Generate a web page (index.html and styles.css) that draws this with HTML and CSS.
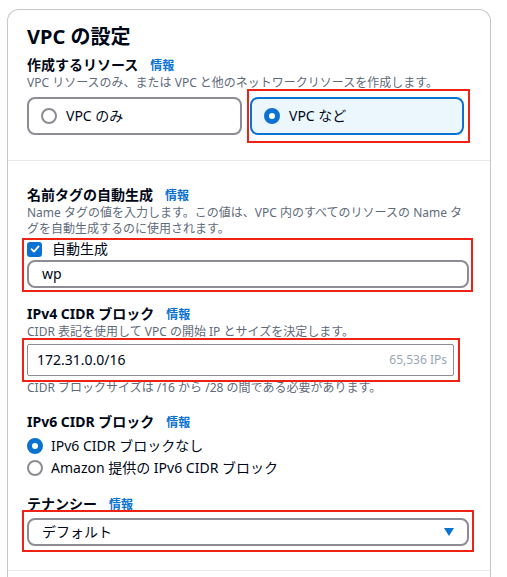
FILE: index.html
```html
<!DOCTYPE html>
<html lang="ja">
<head>
    <meta charset="UTF-8">
    <title>VPC の設定</title>
    <link rel="stylesheet" href="styles.css">
</head>
<body>
<div class="card">
    <section class="panel panel-top">
        <h2 class="title">VPC の設定</h2>
        <div class="label">作成するリソース <a class="info" href="#">情報</a></div>
        <p class="desc">VPC リソースのみ、または VPC と他のネットワークリソースを作成します。</p>
        <div class="tiles">
            <label class="tile"><span class="radio"></span>VPC のみ</label>
            <label class="tile selected"><span class="radio on"></span>VPC など<span class="mark mark-tile"></span></label>
        </div>
    </section>

    <section class="panel">
        <!--名前タグ-->
        <div class="field">
            <div class="label">名前タグの自動生成 <a class="info" href="#">情報</a></div>
            <p class="desc two">Name タグの値を入力します。この値は、VPC 内のすべてのリソースの Name タグを自動生成するのに使用されます。</p>
            <div class="marked">
                <label class="check-row">
                    <span class="checkbox">
                        <svg width="10" height="10" viewBox="0 0 10 10"><path d="M1.5 5.2 L4 7.6 L8.6 2.4" fill="none" stroke="#fff" stroke-width="1.8" stroke-linecap="round" stroke-linejoin="round"/></svg>
                    </span>自動生成
                </label>
                <div class="input round">wp</div>
                <span class="mark mark-name"></span>
            </div>
        </div>

        <!--IPv4-->
        <div class="field gap">
            <div class="label">IPv4 CIDR ブロック <a class="info" href="#">情報</a></div>
            <p class="desc">CIDR 表記を使用して VPC の開始 IP とサイズを決定します。</p>
            <div class="marked cidr-wrap">
                <div class="input cidr"><span>172.31.0.0/16</span><span class="count">65,536 IPs</span></div>
                <span class="mark mark-cidr"></span>
            </div>
            <p class="desc hint">CIDR ブロックサイズは /16 から /28 の間である必要があります。</p>
        </div>

        <!--IPv6-->
        <div class="field gap">
            <div class="label">IPv6 CIDR ブロック <a class="info" href="#">情報</a></div>
            <ul class="radios">
                <li><span class="radio on"></span>IPv6 CIDR ブロックなし</li>
                <li><span class="radio"></span>Amazon 提供の IPv6 CIDR ブロック</li>
            </ul>
        </div>

        <!--テナンシー-->
        <div class="field gap-s">
            <div class="label">テナンシー <a class="info" href="#">情報</a></div>
            <div class="marked select-wrap">
                <div class="input round select"><span>デフォルト</span><span class="caret"></span></div>
                <span class="mark mark-select"></span>
            </div>
        </div>
    </section>

    <section class="panel panel-next"></section>
</div>
</body>
</html>
```

FILE: styles.css
```css
* {
    margin: 0;
    padding: 0;
    box-sizing: border-box;
}

html, body {
    overflow: hidden;
}

body {
    background: #fff;
    color: #000716;
    font-family: "Noto Sans", "Noto Sans CJK JP", sans-serif;
    font-size: 14px;
    line-height: 20px;
}

ul {
    list-style: none;
}

.card {
    width: 484px;
    height: calc(100vh - 9px);
    margin: 9px 0 0 7px;
    border: 1px solid #c6c6cd;
    border-bottom: 0;
    border-radius: 12px 12px 0 0;
}

.panel {
    padding: 24px 21px 24px 19px;
    border-top: 1px solid #e9ebed;
}

.panel-top {
    padding-top: 15px;
    padding-bottom: 25px;
    border-top: 0;
}

.title {
    height: 24px;
    font-size: 20px;
    line-height: 24px;
    font-weight: bold;
}

.panel-top .label {
    margin-top: 6px;
}

.label {
    display: flex;
    align-items: baseline;
    gap: 12px;
    height: 20px;
    font-weight: bold;
}

.info {
    color: #0972d3;
    font-size: 12px;
    line-height: 16px;
    text-decoration: none;
}

.desc {
    height: 16px;
    color: #5f6b7a;
    font-size: 12px;
    line-height: 16px;
}

.desc.two {
    height: 32px;
}

.tiles {
    display: grid;
    grid-template-columns: 215px 214px;
    gap: 8px;
    margin-top: 6px;
}

.tile {
    position: relative;
    display: flex;
    align-items: center;
    gap: 9px;
    height: 38px;
    padding: 0 12px;
    border: 2px solid #8c8c94;
    border-radius: 8px;
}

.tile.selected {
    border-color: #0972d3;
    background: #ebf6fd;
}

.radio {
    display: inline-block;
    width: 16px;
    height: 16px;
    border: 2px solid #8c8c94;
    border-radius: 50%;
    background: #fff;
    flex: none;
}

.radio.on {
    border: 5px solid #0972d3;
}

.marked {
    position: relative;
}

.mark {
    position: absolute;
    border: 2px solid #ee2316;
}

.mark-tile {
    top: -10px;
    left: -5px;
    right: -8px;
    bottom: -10px;
}

.mark-name {
    top: -1px;
    left: -5px;
    right: -4px;
    bottom: -4px;
}

.mark-cidr {
    top: -6px;
    left: -5px;
    right: -6px;
    bottom: -6px;
}

.mark-select {
    top: -8px;
    left: -5px;
    right: -5px;
    bottom: -6px;
}

.check-row {
    display: flex;
    align-items: center;
    gap: 10px;
    height: 20px;
    margin-top: 2px;
}

.checkbox {
    display: flex;
    align-items: center;
    justify-content: center;
    width: 15px;
    height: 15px;
    border-radius: 3px;
    background: #0972d3;
}

.input {
    display: flex;
    align-items: center;
    border: 1px solid #8c8c94;
    border-radius: 2px;
}

.input.round {
    height: 28px;
    margin-top: 1px;
    padding: 0 13px;
    border: 2px solid #8c8c94;
    border-radius: 8px;
}

.gap {
    margin-top: 16px;
}

.gap-s {
    margin-top: 15px;
}

.cidr-wrap {
    width: 427px;
    margin-top: 4px;
}

.cidr {
    justify-content: space-between;
    height: 32px;
    padding: 0 6px 0 9px;
}

.count {
    color: #9ba7b6;
    font-size: 12px;
}

.hint {
    margin-top: 4px;
}

.radios {
    margin-top: 3px;
}

.radios li {
    display: flex;
    align-items: center;
    gap: 8px;
    height: 22px;
}

.select-wrap {
    margin-top: 4px;
}

.select {
    justify-content: space-between;
    margin-top: 0;
    padding-right: 14px;
}

.caret {
    width: 0;
    height: 0;
    border-left: 5px solid transparent;
    border-right: 5px solid transparent;
    border-top: 8px solid #0972d3;
}

.panel-next {
    padding: 0;
}
```
